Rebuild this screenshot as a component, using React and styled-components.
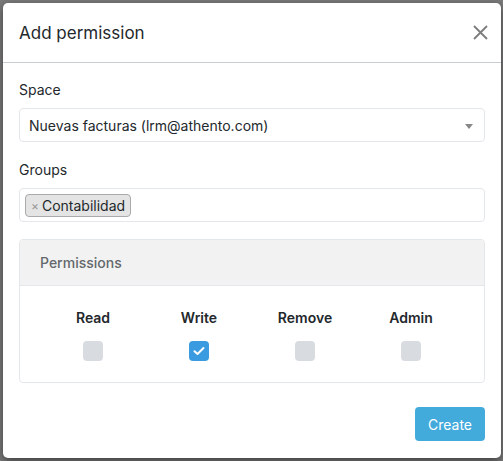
import React, { useState } from 'react';
import styled, { createGlobalStyle } from 'styled-components';

const GlobalStyle = createGlobalStyle`
  html, body {
    margin: 0;
    padding: 0;
    background: #7a7a7a;
    font-family: Inter, "Noto Sans", "Liberation Sans", sans-serif;
  }
  * { box-sizing: border-box; }
`;

const Backdrop = styled.div`
  width: 503px;
  height: 461px;
  padding: 3px 2px 3px 3px;
  background: #7a7a7a;
  overflow: hidden;
`;

const Modal = styled.div`
  width: 498px;
  height: 455px;
  background: #fff;
  border-radius: 5px;
  box-shadow: 0 3px 9px rgba(0, 0, 0, 0.5);
  display: flex;
  flex-direction: column;
`;

const Header = styled.div`
  height: 60px;
  display: flex;
  align-items: center;
  justify-content: space-between;
  padding: 0 11px 0 16px;
  border-bottom: 1px solid #c8ced3;
`;

const Title = styled.h4`
  margin: 0;
  font-size: 17px;
  font-weight: 400;
  color: #23282c;
`;

const Close = styled.button`
  border: 0;
  background: none;
  padding: 0;
  width: 20px;
  height: 20px;
  display: flex;
  align-items: center;
  justify-content: center;
  cursor: pointer;
`;

const Body = styled.div`
  padding: 17px 16px 0 16px;
`;

const Label = styled.div`
  font-size: 14px;
  line-height: 20px;
  color: #23282c;
  margin-bottom: 8px;
`;

const Field = styled.div`
  height: 34px;
  border: 1px solid #e4e7ea;
  border-radius: 4px;
  display: flex;
  align-items: center;
  padding: 0 ${({ $tags }) => ($tags ? '5px' : '9px')};
  margin-bottom: ${({ $last }) => ($last ? '17px' : '18px')};
  font-size: 14px;
  color: #23282c;
  position: relative;
`;

const Caret = styled.span`
  position: absolute;
  right: 11px;
  top: 15px;
  border-left: 4px solid transparent;
  border-right: 4px solid transparent;
  border-top: 5px solid #888;
`;

const Tag = styled.span`
  display: inline-flex;
  align-items: center;
  height: 23px;
  padding: 0 5px;
  background: #e4e4e4;
  border: 1px solid #aaa;
  border-radius: 4px;
  font-size: 14px;
  color: #23282c;
`;

const TagX = styled.span`
  color: #999;
  font-size: 12px;
  margin-right: 3px;
`;

const Panel = styled.div`
  border: 1px solid #e4e7ea;
  border-radius: 4px;
  overflow: hidden;
`;

const PanelHead = styled.div`
  height: 46px;
  background: #f2f2f2;
  border-bottom: 1px solid #e4e7ea;
  display: flex;
  align-items: center;
  padding-left: 20px;
  font-size: 14px;
  font-weight: 500;
  color: #63676b;
`;

const PanelBody = styled.div`
  display: grid;
  grid-template-columns: repeat(4, 1fr);
  padding: 22px 20px 21px;
`;

const Col = styled.div`
  display: flex;
  flex-direction: column;
  align-items: center;
  gap: 13px;
`;

const ColLabel = styled.div`
  font-size: 14px;
  line-height: 20px;
  font-weight: 600;
  color: #23282c;
`;

const Box = styled.span`
  width: 20px;
  height: 20px;
  border-radius: 4px;
  background: ${({ $on }) => ($on ? '#3a9be0' : '#d8dce0')};
  display: flex;
  align-items: center;
  justify-content: center;
  cursor: pointer;
`;

const Footer = styled.div`
  display: flex;
  justify-content: flex-end;
  padding: 24px 16px 0;
`;

const Button = styled.button`
  height: 34px;
  padding: 0 13px;
  border: 0;
  border-radius: 4px;
  background: #43aadc;
  color: #fff;
  font-family: inherit;
  font-size: 14px;
`;

const perms = ['Read', 'Write', 'Remove', 'Admin'];

export default function App() {
  const [checked, setChecked] = useState({ Write: true });

  return (
    <>
      <GlobalStyle />
      <Backdrop>
        <Modal>
          <Header>
            <Title>Add permission</Title>
            <Close aria-label="Close">
              <svg width="15" height="15" viewBox="0 0 15 15">
                <path d="M1 1L14 14M14 1L1 14" stroke="#7d7d7d" strokeWidth="1.8" />
              </svg>
            </Close>
          </Header>
          <Body>
            <Label>Space</Label>
            <Field>
              Nuevas facturas (lrm@athento.com)
              <Caret />
            </Field>
            <Label>Groups</Label>
            <Field $tags $last>
              <Tag>
                <TagX>×</TagX>Contabilidad
              </Tag>
            </Field>
            <Panel>
              <PanelHead>Permissions</PanelHead>
              <PanelBody>
                {perms.map((p) => (
                  <Col key={p}>
                    <ColLabel>{p}</ColLabel>
                    <Box
                      $on={checked[p]}
                      onClick={() => setChecked({ ...checked, [p]: !checked[p] })}
                    >
                      {checked[p] && (
                        <svg width="12" height="10" viewBox="0 0 12 10">
                          <path d="M1.5 5.2L4.5 8L10.5 2" fill="none" stroke="#fff" strokeWidth="2" strokeLinecap="round" strokeLinejoin="round" />
                        </svg>
                      )}
                    </Box>
                  </Col>
                ))}
              </PanelBody>
            </Panel>
          </Body>
          <Footer>
            <Button>Create</Button>
          </Footer>
        </Modal>
      </Backdrop>
    </>
  );
}
